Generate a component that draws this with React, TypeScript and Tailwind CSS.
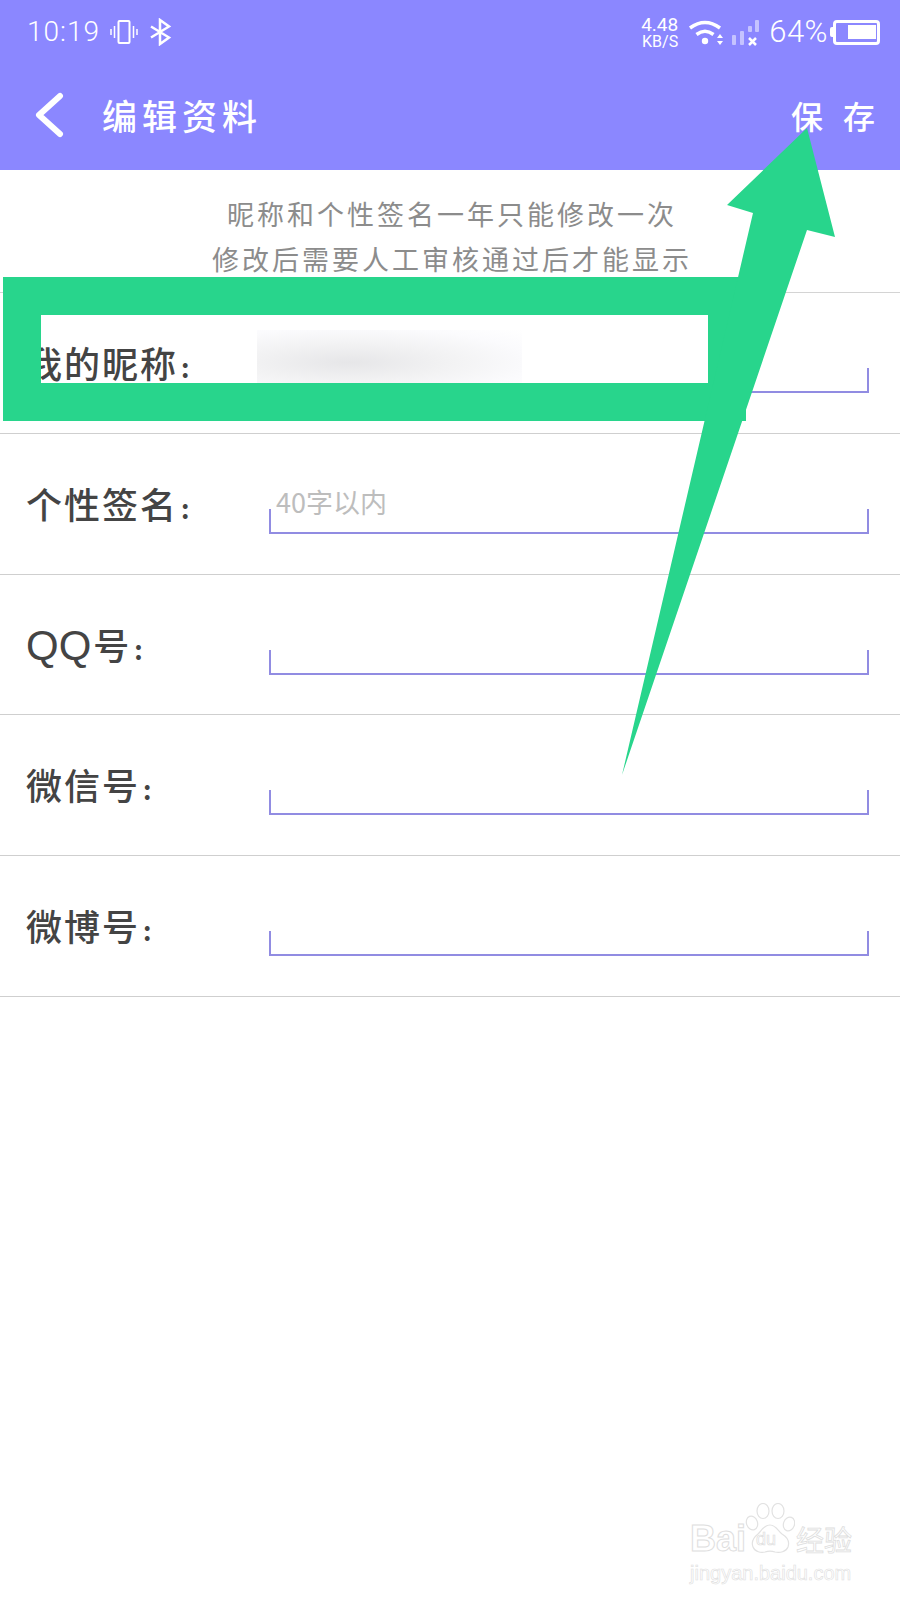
const rows = [
    { prefix: '', label: '我的昵称', placeholder: '', blurred: true },
    { prefix: '', label: '个性签名', placeholder: '40字以内', blurred: false },
    { prefix: 'QQ', label: '号', placeholder: '', blurred: false },
    { prefix: '', label: '微信号', placeholder: '', blurred: false },
    { prefix: '', label: '微博号', placeholder: '', blurred: false },
]

function StatusBar() {
    return (
        <div className="h-[64px] flex items-center justify-between pl-[27px] pr-[20px] text-white">
            <div className="flex items-center">
                <span className="text-[28px] font-light tracking-[1px] font-['Roboto',sans-serif]">10:19</span>
                {/* vibrate */}
                <svg className="ml-[10px]" width="28" height="28" viewBox="0 0 28 28" fill="none" stroke="white" strokeWidth="2">
                    <rect x="8.500" y="3" width="11" height="22" rx="1" />
                    <path d="M4.500 8v12M1 11v6M23.500 8v12M27 11v6" strokeWidth="1.500" />
                </svg>
                {/* bluetooth */}
                <svg className="ml-[12px]" width="22" height="28" viewBox="0 0 22 26" fill="none" stroke="white" strokeWidth="2.500">
                    <path d="M1 7.500 19 18.500 10 25V1l9 6.500L1 18.500" />
                </svg>
            </div>
            <div className="flex items-center">
                <div className="flex flex-col items-end font-['Roboto',sans-serif]">
                    <span className="text-[19px] leading-[19px]">4.48</span>
                    <span className="text-[16px] leading-[16px]">KB/S</span>
                </div>
                <svg className="ml-[10px]" width="36" height="26" viewBox="0 0 36 26" fill="none" stroke="white" strokeWidth="3.500">
                    <path d="M2 9Q17-2 32 9M8.500 15.500Q17 9 25.500 15.500" />
                    <circle cx="17" cy="22" r="3.200" fill="white" stroke="none" />
                    <path d="M32 15l3 4h-6zM32 26l3-4h-6z" fill="white" stroke="none" />
                </svg>
                <svg className="ml-[8px]" width="28" height="28" viewBox="0 0 28 28">
                    <rect x="0" y="17" width="4" height="10" rx="1" fill="#c5c3ff" />
                    <rect x="8" y="13" width="4" height="14" rx="1" fill="#c5c3ff" />
                    <rect x="16" y="8" width="4" height="6" rx="1" fill="#c5c3ff" />
                    <rect x="23" y="2" width="4" height="12" rx="1" fill="#c5c3ff" />
                    <path d="M17 20l7 7M24 20l-7 7" stroke="white" strokeWidth="2.500" />
                </svg>
                <span className="ml-[9px] text-[31px] font-light tracking-[0.5px] font-['Roboto',sans-serif]">64%</span>
                <div className="ml-[2px] flex items-center">
                    <div className="w-[3px] h-[10px] bg-white rounded-l-[2px]" />
                    <div className="w-[47px] h-[25px] border-[3px] border-white rounded-[4px] flex justify-end items-center pr-[1px]">
                        <div className="w-[28px] h-[14px] bg-white" />
                    </div>
                </div>
            </div>
        </div>
    )
}

function WatermarkPaw() {
    return (
        <svg width="50" height="52" viewBox="0 0 50 52" fill="white" stroke="#e2e2e2" strokeWidth="1.200">
            <ellipse cx="7" cy="20" rx="5.500" ry="7" transform="rotate(-20 7 20)" />
            <ellipse cx="18" cy="8" rx="6" ry="7.500" />
            <ellipse cx="33" cy="8" rx="6" ry="7.500" />
            <ellipse cx="44" cy="21" rx="5.500" ry="7" transform="rotate(20 44 21)" />
            <path d="M25 22c-6 0-8 5-12 9-5 4-7 8-5 13 2 5 8 6 12 5 3-1 7-1 10 0 5 1 11 0 13-5 2-6-1-10-6-13-4-3-6-9-12-9z" />
        </svg>
    )
}

export default function App() {
    return (
        <div className="relative w-[900px] h-[1600px] overflow-hidden bg-white font-['Noto_Sans_CJK_SC',sans-serif]">
            <div className="h-[170px] bg-[#8b87ff]">
                <StatusBar />
                <div className="h-[106px] flex items-center justify-between pl-[34px] pr-[25px] pb-[4px] text-white">
                    <div className="flex items-center">
                        <svg width="30" height="46" viewBox="0 0 30 46" fill="none" stroke="white" strokeWidth="6" strokeLinecap="round" strokeLinejoin="round">
                            <path d="M26 4 5 23l21 19" />
                        </svg>
                        <span className="ml-[38px] text-[35px] font-medium tracking-[5px]">编辑资料</span>
                    </div>
                    <span className="text-[32px] font-medium tracking-[20px] mr-[-20px]">保存</span>
                </div>
            </div>

            <div className="h-[122px] pt-[21px] pl-[4px] flex flex-col items-center text-[27px] leading-[45px] tracking-[3px] text-[#8c8c8c]">
                <p>昵称和个性签名一年只能修改一次</p>
                <p>修改后需要人工审核通过后才能显示</p>
            </div>

            <div className="border-t border-[#d4d4d4]">
                {rows.map((row) => (
                    <div key={row.label} className="h-[140.8px] border-b border-[#cfcfcf] flex pl-[26px] pr-[31px]">
                        <div className="w-[243px] pt-[45px] text-[36px] font-medium leading-[48px] tracking-[2px] text-[#444444] whitespace-nowrap">
                            {row.prefix && (
                                <span className="font-['Liberation_Sans',sans-serif] font-normal text-[42px] tracking-[0px] mr-[2px]">{row.prefix}</span>
                            )}
                            {row.label}
                            <span className="ml-[3px] text-[26px] font-bold">:</span>
                        </div>
                        <div className="relative flex-1 h-[25px] mt-[75px] border-x-2 border-b-2 border-[#918ce2]">
                            {row.placeholder && (
                                <span className="absolute left-[5px] bottom-[12px] text-[27px] leading-[36px] text-[#bdbdbd] whitespace-nowrap">
                                    {row.placeholder}
                                </span>
                            )}
                            {row.blurred && (
                                <div className="absolute left-[-14px] top-[-38px] w-[265px] h-[54px] bg-[radial-gradient(ellipse_at_35%_60%,#e6e6e8_0%,#f2f2f3_40%,#fbfbfd_75%,#ffffff_100%)]" />
                            )}
                        </div>
                    </div>
                ))}
            </div>

            {/* green annotation: box and arrow */}
            <div className="absolute left-[3px] top-[277px] w-[743px] h-[144px] border-[38px] border-[#28d58c]" />
            <svg className="absolute left-0 top-0" width="900" height="800" viewBox="0 0 900 800">
                <polygon points="807,128 835,237 807,230 622,775 753,213 727,205" fill="#28d58c" />
            </svg>

            {/* baidu watermark */}
            <div className="absolute left-[690px] top-[1503px] w-[165px]">
                <div className="flex items-end">
                    <span className="w-[55px] text-[36px] leading-[32px] font-bold font-['Liberation_Sans',sans-serif] text-transparent [-webkit-text-stroke:1px_#dedede]">Bai</span>
                    <div className="relative">
                        <WatermarkPaw />
                        <span className="absolute left-[11px] top-[27px] text-[18px] leading-[18px] font-['Liberation_Sans',sans-serif] text-transparent [-webkit-text-stroke:0.7px_#dedede]">du</span>
                    </div>
                    <span className="ml-[1px] text-[28px] leading-[32px] text-transparent [-webkit-text-stroke:0.8px_#dedede]">经验</span>
                </div>
                <div className="mt-[6px] text-[20px] leading-[24px] font-['Liberation_Sans',sans-serif] text-transparent [-webkit-text-stroke:0.6px_#dedede] whitespace-nowrap">jingyan.baidu.com</div>
            </div>
        </div>
    )
}
